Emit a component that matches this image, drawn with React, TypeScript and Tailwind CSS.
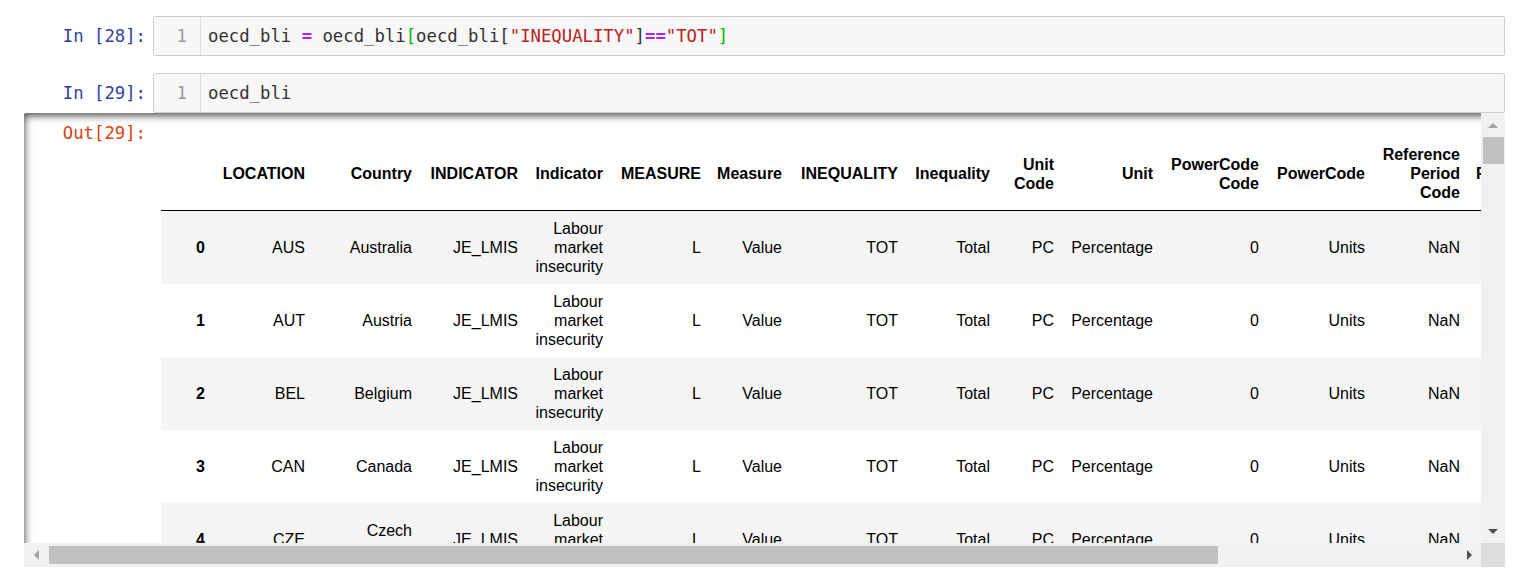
import React from 'react';

const mono = "font-['DejaVu_Sans_Mono',monospace] text-[17.3px] leading-[22px]";

const cols = [
  { label: '', w: 'w-[52px]' },
  { label: 'LOCATION', w: 'w-[100px]' },
  { label: 'Country', w: 'w-[107px]' },
  { label: 'INDICATOR', w: 'w-[106px]' },
  { label: 'Indicator', w: 'w-[85px]' },
  { label: 'MEASURE', w: 'w-[98px]' },
  { label: 'Measure', w: 'w-[81px]' },
  { label: 'INEQUALITY', w: 'w-[116px]' },
  { label: 'Inequality', w: 'w-[92px]' },
  { label: 'Unit Code', w: 'w-[64px]' },
  { label: 'Unit', w: 'w-[99px]' },
  { label: 'PowerCode Code', w: 'w-[106px]' },
  { label: 'PowerCode', w: 'w-[106px]' },
  { label: 'Reference Period Code', w: 'w-[95px]' },
  { label: 'Reference Period', w: 'w-[140px]' },
  { label: 'Value', w: 'w-[70px]' },
  { label: 'Flag Codes', w: 'w-[100px]' },
  { label: 'Flags', w: 'w-[100px]' },
];

const countries = [
  ['AUS', 'Australia'],
  ['AUT', 'Austria'],
  ['BEL', 'Belgium'],
  ['CAN', 'Canada'],
  ['CZE', 'Czech Republic'],
  ['DNK', 'Denmark'],
];

function Prompt({ text, color, width }: { text: string; color: string; width: string }) {
  return (
    <div className={`${width} shrink-0 pr-[7px] pt-[9px] text-right ${mono} ${color}`}>{text}</div>
  );
}

function CodeCell({ n, children }: { n: number; children: React.ReactNode }) {
  return (
    <div className="flex items-start">
      <Prompt text={`In [${n}]:`} color="text-[#303f9f]" width="w-[153px]" />
      <div className="flex w-[1352px] rounded-[2px] border border-[#cfcfcf] bg-[#f7f7f7]">
        <div className={`w-[47px] shrink-0 border-r border-[#dddddd] py-[8px] pr-[13px] text-right text-[#999999] ${mono}`}>1</div>
        <div className={`py-[8px] pl-[7px] whitespace-pre text-[#333333] ${mono}`}>{children}</div>
      </div>
    </div>
  );
}

function Arrow({ dir, dark }: { dir: 'up' | 'down' | 'left' | 'right'; dark?: boolean }) {
  const pts = {
    up: '0,5 5,0 10,5',
    down: '0,0 10,0 5,5',
    left: '5,0 5,10 0,5',
    right: '0,0 0,10 5,5',
  }[dir];
  const horiz = dir === 'left' || dir === 'right';
  return (
    <svg width={horiz ? 5 : 10} height={horiz ? 10 : 5} viewBox={horiz ? '0 0 5 10' : '0 0 10 5'}>
      <polygon points={pts} fill={dark ? '#505050' : '#a3a3a3'} />
    </svg>
  );
}

export default function App() {
  return (
    <div className="min-h-screen bg-white pt-[16px] font-['Liberation_Sans',Arial,sans-serif]">
      <CodeCell n={28}>
        oecd_bli <span className="font-bold text-[#aa22ff]">=</span> oecd_bli<span className="text-[#00bb00]">[</span>oecd_bli[<span className="text-[#ba2121]">"INEQUALITY"</span>]<span className="font-bold text-[#aa22ff]">==</span><span className="text-[#ba2121]">"TOT"</span><span className="text-[#00bb00]">]</span>
      </CodeCell>
      <div className="mt-[17px]">
        <CodeCell n={29}>oecd_bli</CodeCell>
      </div>

      {/* output scroll area */}
      <div className="ml-[24px] flex h-[454px] w-[1481px] flex-col rounded-[2px] shadow-[inset_0_2px_8px_rgba(0,0,0,0.8)]">
        <div className="flex min-h-0 flex-1">
          <div className="flex min-w-0 flex-1 overflow-hidden">
            <Prompt text="Out[29]:" color="text-[#d84315]" width="w-[129px]" />
            <div className="pl-[8px] pt-[24px]">
              <table className="w-[1717px] shrink-0 table-fixed border-collapse text-[16px] leading-[19px] text-black">
                <colgroup>
                  {cols.map((c, i) => (
                    <col key={i} className={c.w} />
                  ))}
                </colgroup>
                <thead>
                  <tr className="border-b border-black">
                    {cols.map((c, i) => (
                      <th key={i} className={`p-2 text-right align-middle font-bold ${c.label === 'Reference Period' ? 'whitespace-nowrap' : ''}`}>
                        {c.label}
                      </th>
                    ))}
                  </tr>
                </thead>
                <tbody>
                  {countries.map(([code, name], i) => (
                    <tr key={code} className={i % 2 === 0 ? 'bg-[#f5f5f5]' : 'bg-white'}>
                      <th className="p-2 text-right font-bold">{i}</th>
                      <td className="p-2 text-right">{code}</td>
                      <td className="p-2 text-right">{name}</td>
                      <td className="p-2 text-right">JE_LMIS</td>
                      <td className="p-2 text-right">Labour market insecurity</td>
                      <td className="p-2 text-right">L</td>
                      <td className="p-2 text-right">Value</td>
                      <td className="p-2 text-right">TOT</td>
                      <td className="p-2 text-right">Total</td>
                      <td className="p-2 text-right">PC</td>
                      <td className="p-2 text-right">Percentage</td>
                      <td className="p-2 text-right">0</td>
                      <td className="p-2 text-right">Units</td>
                      <td className="p-2 text-right">NaN</td>
                      <td className="p-2 text-right">NaN</td>
                      <td className="p-2 text-right">5.4</td>
                      <td className="p-2 text-right">NaN</td>
                      <td className="p-2 text-right">NaN</td>
                    </tr>
                  ))}
                </tbody>
              </table>
            </div>
          </div>

          {/* vertical scrollbar */}
          <div className="flex w-[24px] shrink-0 flex-col bg-[#f1f1f1]">
            <div className="flex h-[24px] items-center justify-center">
              <Arrow dir="up" />
            </div>
            <div className="flex-1">
              <div className="ml-[2px] mr-px h-[27px] bg-[#c1c1c1]" />
            </div>
            <div className="flex h-[24px] items-center justify-center">
              <Arrow dir="down" dark />
            </div>
          </div>
        </div>

        {/* horizontal scrollbar */}
        <div className="flex h-[24px] shrink-0">
          <div className="flex flex-1 bg-[#f1f1f1]">
            <div className="flex w-[24px] items-center justify-center">
              <Arrow dir="left" />
            </div>
            <div className="flex flex-1 items-center pl-px">
              <div className="h-[18px] w-[1169px] bg-[#c1c1c1]" />
            </div>
            <div className="flex w-[24px] items-center justify-center">
              <Arrow dir="right" dark />
            </div>
          </div>
          <div className="w-[24px] bg-[#dcdcdc]" />
        </div>
      </div>
    </div>
  );
}
